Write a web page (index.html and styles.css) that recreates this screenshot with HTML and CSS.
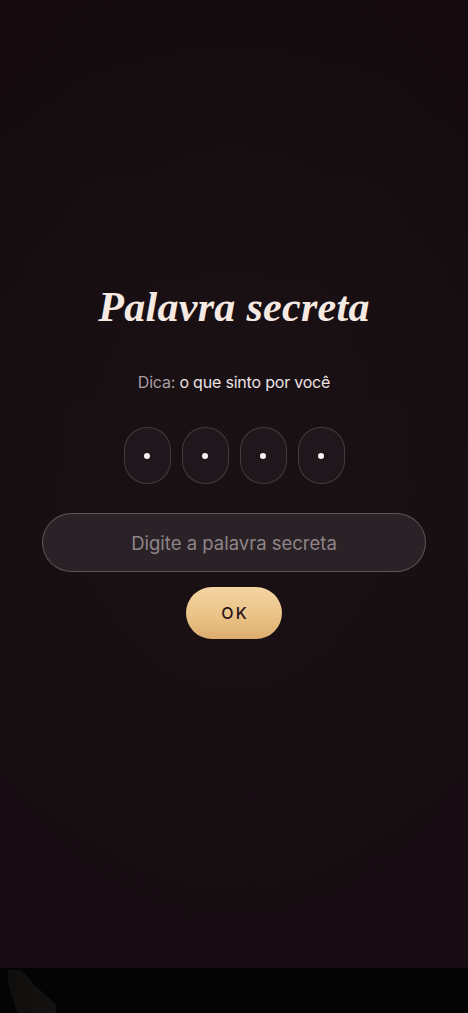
FILE: index.html
```html
<!DOCTYPE html>
<html lang="pt">
<head>
<meta charset="utf-8">
<title>Palavra secreta</title>
<link rel="stylesheet" href="styles.css">
</head>
<body>
<div class="screen">
  <main class="lock">
    <h1 class="title">Palavra secreta</h1>
    <p class="hint"><span class="hint-label">Dica:</span> o que sinto por você</p>
    <div class="pins">
      <div class="pin"><span class="dot"></span></div>
      <div class="pin"><span class="dot"></span></div>
      <div class="pin"><span class="dot"></span></div>
      <div class="pin"><span class="dot"></span></div>
    </div>
    <input class="secret" type="text" placeholder="Digite a palavra secreta">
    <button class="ok" type="button">OK</button>
  </main>
  <footer class="bottom">
    <div class="shape"></div>
  </footer>
</div>
</body>
</html>
```
FILE: styles.css
```css
html, body {
  margin: 0;
  padding: 0;
  background: #000;
}
.screen {
  width: 468px;
  height: 1013px;
  display: flex;
  flex-direction: column;
  overflow: hidden;
}
.lock {
  height: 968px;
  box-sizing: border-box;
  background:
    radial-gradient(ellipse 70% 50% at 50% 45%, #1a1115 0%, rgba(26,17,21,0) 100%),
    linear-gradient(180deg, #140a0e 0%, #170d12 50%, #160c11 100%);
  display: flex;
  flex-direction: column;
  align-items: center;
  padding-top: 283px;
  font-family: Inter, "Open Sans", sans-serif;
}
.title {
  margin: 0;
  font-family: "Liberation Serif", "DejaVu Serif", serif;
  font-style: italic;
  font-weight: 700;
  font-size: 42px;
  line-height: 48px;
  color: #f5e9e2;
  letter-spacing: 0.3px;
}
.hint {
  margin: 41px 0 0;
  font-size: 16px;
  line-height: 20px;
  color: #ece3e3;
  letter-spacing: -0.2px;
}
.hint-label {
  color: #a99ea2;
}
.pins {
  margin-top: 35px;
  display: flex;
  gap: 11px;
}
.pin {
  width: 47px;
  height: 57px;
  box-sizing: border-box;
  border: 1px solid rgba(255,255,255,0.16);
  border-radius: 23px;
  background: #1f171b;
  display: flex;
  align-items: center;
  justify-content: center;
}
.dot {
  width: 6px;
  height: 6px;
  border-radius: 50%;
  background: #fbf5f3;
}
.secret {
  margin-top: 29px;
  width: 384px;
  height: 59px;
  box-sizing: border-box;
  border-radius: 30px;
  border: 1px solid rgba(255,255,255,0.24);
  background: #2a2226;
  color: #efe6e6;
  font-family: Inter, "Open Sans", sans-serif;
  font-size: 18.5px;
  text-align: center;
  outline: none;
  padding: 0 20px;
}
.secret::placeholder {
  color: #8f8589;
  opacity: 1;
}
.ok {
  margin-top: 15px;
  width: 96px;
  height: 52px;
  border: none;
  border-radius: 26px;
  background: linear-gradient(180deg, #f4d5a2 0%, #e9c185 60%, #dcac6e 100%);
  color: #2a1418;
  font-family: Inter, "Open Sans", sans-serif;
  font-size: 16px;
  font-weight: 500;
  letter-spacing: 2px;
  padding: 0 0 0 2px;
}
.bottom {
  height: 45px;
  background: #050404;
  position: relative;
}
.shape {
  position: absolute;
  left: 8px;
  top: 2px;
  width: 48px;
  height: 43px;
  background: linear-gradient(90deg, #0f0e0d, #141311);
  clip-path: polygon(0 0, 28% 0, 55% 35%, 100% 80%, 100% 100%, 20% 100%, 0 30%);
}
```
